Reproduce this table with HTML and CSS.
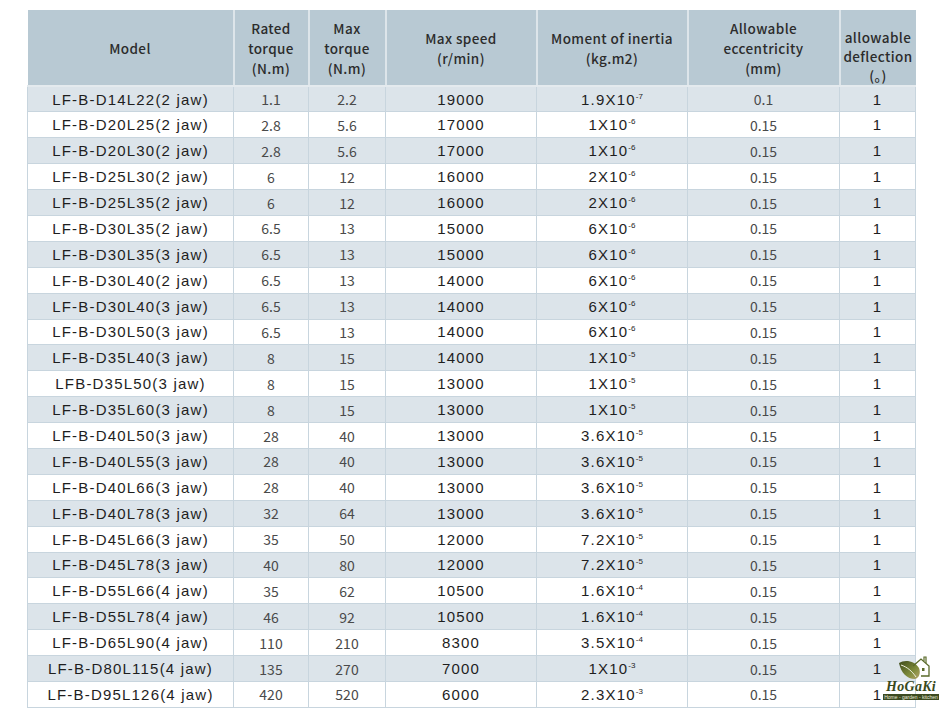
FILE: index.html
```html
<!DOCTYPE html>
<html>
<head>
<meta charset="utf-8">
<link rel="stylesheet" href="styles.css">
</head>
<body>
<div class="page">
<table class="spec">
<colgroup>
<col class="c-model"><col class="c-rated"><col class="c-max"><col class="c-speed"><col class="c-inertia"><col class="c-ecc"><col class="c-defl">
</colgroup>
<thead>
<tr>
<th>Model</th>
<th>Rated<br>torque<br>(N.m)</th>
<th>Max<br>torque<br>(N.m)</th>
<th>Max speed<br>(r/min)</th>
<th>Moment of inertia<br>(kg.m2)</th>
<th>Allowable<br>eccentricity<br>(mm)</th>
<th class="defl">allowable<br>deflection<br>(。)</th>
</tr>
</thead>
<tbody>
<tr><td class="a">LF-B-D14L22(2 jaw)</td><td class="n">1.1</td><td class="n">2.2</td><td class="a">19000</td><td class="a">1.9X10<sup>-7</sup></td><td class="n">0.1</td><td class="a">1</td></tr>
<tr><td class="a">LF-B-D20L25(2 jaw)</td><td class="n">2.8</td><td class="n">5.6</td><td class="a">17000</td><td class="a">1X10<sup>-6</sup></td><td class="n">0.15</td><td class="a">1</td></tr>
<tr><td class="a">LF-B-D20L30(2 jaw)</td><td class="n">2.8</td><td class="n">5.6</td><td class="a">17000</td><td class="a">1X10<sup>-6</sup></td><td class="n">0.15</td><td class="a">1</td></tr>
<tr><td class="a">LF-B-D25L30(2 jaw)</td><td class="n">6</td><td class="n">12</td><td class="a">16000</td><td class="a">2X10<sup>-6</sup></td><td class="n">0.15</td><td class="a">1</td></tr>
<tr><td class="a">LF-B-D25L35(2 jaw)</td><td class="n">6</td><td class="n">12</td><td class="a">16000</td><td class="a">2X10<sup>-6</sup></td><td class="n">0.15</td><td class="a">1</td></tr>
<tr><td class="a">LF-B-D30L35(2 jaw)</td><td class="n">6.5</td><td class="n">13</td><td class="a">15000</td><td class="a">6X10<sup>-6</sup></td><td class="n">0.15</td><td class="a">1</td></tr>
<tr><td class="a">LF-B-D30L35(3 jaw)</td><td class="n">6.5</td><td class="n">13</td><td class="a">15000</td><td class="a">6X10<sup>-6</sup></td><td class="n">0.15</td><td class="a">1</td></tr>
<tr><td class="a">LF-B-D30L40(2 jaw)</td><td class="n">6.5</td><td class="n">13</td><td class="a">14000</td><td class="a">6X10<sup>-6</sup></td><td class="n">0.15</td><td class="a">1</td></tr>
<tr><td class="a">LF-B-D30L40(3 jaw)</td><td class="n">6.5</td><td class="n">13</td><td class="a">14000</td><td class="a">6X10<sup>-6</sup></td><td class="n">0.15</td><td class="a">1</td></tr>
<tr><td class="a">LF-B-D30L50(3 jaw)</td><td class="n">6.5</td><td class="n">13</td><td class="a">14000</td><td class="a">6X10<sup>-6</sup></td><td class="n">0.15</td><td class="a">1</td></tr>
<tr><td class="a">LF-B-D35L40(3 jaw)</td><td class="n">8</td><td class="n">15</td><td class="a">14000</td><td class="a">1X10<sup>-5</sup></td><td class="n">0.15</td><td class="a">1</td></tr>
<tr><td class="a">LFB-D35L50(3 jaw)</td><td class="n">8</td><td class="n">15</td><td class="a">13000</td><td class="a">1X10<sup>-5</sup></td><td class="n">0.15</td><td class="a">1</td></tr>
<tr><td class="a">LF-B-D35L60(3 jaw)</td><td class="n">8</td><td class="n">15</td><td class="a">13000</td><td class="a">1X10<sup>-5</sup></td><td class="n">0.15</td><td class="a">1</td></tr>
<tr><td class="a">LF-B-D40L50(3 jaw)</td><td class="n">28</td><td class="n">40</td><td class="a">13000</td><td class="a">3.6X10<sup>-5</sup></td><td class="n">0.15</td><td class="a">1</td></tr>
<tr><td class="a">LF-B-D40L55(3 jaw)</td><td class="n">28</td><td class="n">40</td><td class="a">13000</td><td class="a">3.6X10<sup>-5</sup></td><td class="n">0.15</td><td class="a">1</td></tr>
<tr><td class="a">LF-B-D40L66(3 jaw)</td><td class="n">28</td><td class="n">40</td><td class="a">13000</td><td class="a">3.6X10<sup>-5</sup></td><td class="n">0.15</td><td class="a">1</td></tr>
<tr><td class="a">LF-B-D40L78(3 jaw)</td><td class="n">32</td><td class="n">64</td><td class="a">13000</td><td class="a">3.6X10<sup>-5</sup></td><td class="n">0.15</td><td class="a">1</td></tr>
<tr><td class="a">LF-B-D45L66(3 jaw)</td><td class="n">35</td><td class="n">50</td><td class="a">12000</td><td class="a">7.2X10<sup>-5</sup></td><td class="n">0.15</td><td class="a">1</td></tr>
<tr><td class="a">LF-B-D45L78(3 jaw)</td><td class="n">40</td><td class="n">80</td><td class="a">12000</td><td class="a">7.2X10<sup>-5</sup></td><td class="n">0.15</td><td class="a">1</td></tr>
<tr><td class="a">LF-B-D55L66(4 jaw)</td><td class="n">35</td><td class="n">62</td><td class="a">10500</td><td class="a">1.6X10<sup>-4</sup></td><td class="n">0.15</td><td class="a">1</td></tr>
<tr><td class="a">LF-B-D55L78(4 jaw)</td><td class="n">46</td><td class="n">92</td><td class="a">10500</td><td class="a">1.6X10<sup>-4</sup></td><td class="n">0.15</td><td class="a">1</td></tr>
<tr><td class="a">LF-B-D65L90(4 jaw)</td><td class="n">110</td><td class="n">210</td><td class="a">8300</td><td class="a">3.5X10<sup>-4</sup></td><td class="n">0.15</td><td class="a">1</td></tr>
<tr><td class="a">LF-B-D80L115(4 jaw)</td><td class="n">135</td><td class="n">270</td><td class="a">7000</td><td class="a">1X10<sup>-3</sup></td><td class="n">0.15</td><td class="a">1</td></tr>
<tr><td class="a">LF-B-D95L126(4 jaw)</td><td class="n">420</td><td class="n">520</td><td class="a">6000</td><td class="a">2.3X10<sup>-3</sup></td><td class="n">0.15</td><td class="a">1</td></tr>
</tbody>
</table>
<div class="logo">
<svg class="logo-icon" viewBox="0 0 34 26" width="34" height="26">
<defs>
<linearGradient id="lg" x1="0" y1="0" x2="1" y2="1">
<stop offset="0" stop-color="#3e4a1c"/>
<stop offset="0.6" stop-color="#7d8a3a"/>
<stop offset="1" stop-color="#b4a56a"/>
</linearGradient>
</defs>
<path d="M2 8 C8 4 18 6 22 13 C24 18 22 23 18 24 C10 24 4 18 2 8 Z" fill="url(#lg)"/>
<path d="M4 10 C10 12 15 16 19 22" stroke="#eef0e0" stroke-width="1" fill="none"/>
<path d="M16 11 L24 4 L32 11 L32 21 L24 21" stroke="#5a6a2a" stroke-width="1.3" fill="none"/>
<path d="M27 6 L27 2 L29 2 L29 8" stroke="#5a6a2a" stroke-width="1.2" fill="none"/>
<rect x="25" y="13" width="2.5" height="3" fill="#5a6a2a"/>
</svg>
<div class="logo-name">HoGaKi</div>
<div class="logo-bar">Home - garden - kitchen</div>
</div>
</div>
</body>
</html>
```
FILE: styles.css
```css
html, body {
  margin: 0;
  padding: 0;
  background: #ffffff;
}
.page {
  position: relative;
  width: 940px;
  height: 713px;
  padding: 10px 0 0 27px;
  box-sizing: border-box;
}
.spec {
  border-collapse: collapse;
  table-layout: fixed;
  width: 888px;
}
.c-model { width: 206px; }
.c-rated { width: 75px; }
.c-max { width: 77px; }
.c-speed { width: 151px; }
.c-inertia { width: 151px; }
.c-ecc { width: 152px; }
.c-defl { width: 76px; }
.spec th {
  background: #b8c9d3;
  color: #2c2c2c;
  font-family: "Noto Sans CJK SC", "Noto Sans", sans-serif;
  font-weight: 500;
  font-size: 13.5px;
  letter-spacing: 0.4px;
  line-height: 20px;
  height: 75px;
  padding: 0;
  text-align: center;
  vertical-align: middle;
  border-left: 2px solid #dde5ea;
  border-bottom: 2px solid #e4eaee;
  box-sizing: border-box;
}
.spec th:first-child {
  border-left: none;
}
.spec th.defl {
  line-height: 19px;
  padding-top: 18px;
}
.spec tbody tr {
  height: 25.9px;
}
.spec tbody tr:nth-child(odd) td {
  background: #dce4ea;
}
.spec td {
  border: 1px solid #c8d5de;
  padding: 0;
  text-align: center;
  vertical-align: middle;
  white-space: nowrap;
}
.spec td.a {
  font-family: "Liberation Sans", Arial, sans-serif;
  font-size: 15px;
  letter-spacing: 1.2px;
  color: #1e1e1e;
}
.spec td.n {
  font-family: "Noto Sans CJK SC", "Noto Sans", sans-serif;
  font-size: 14px;
  color: #4a4a4a;
}
.spec sup {
  font-size: 8px;
  letter-spacing: 0;
  vertical-align: 6px;
  line-height: 0;
}
.logo {
  position: absolute;
  left: 883px;
  top: 655px;
  width: 56px;
  display: flex;
  flex-direction: column;
  align-items: center;
}
.logo-icon {
  display: block;
  margin-left: 6px;
}
.logo-name {
  font-family: "Liberation Serif", serif;
  font-style: italic;
  font-weight: 700;
  font-size: 14px;
  line-height: 12px;
  color: #3a4a1c;
  letter-spacing: 0.3px;
}
.logo-bar {
  background: #3c4a20;
  color: #e8ecd8;
  font-family: "Liberation Sans", sans-serif;
  font-size: 5px;
  line-height: 6px;
  padding: 0 1px;
  white-space: nowrap;
  margin-top: 1px;
}
```
